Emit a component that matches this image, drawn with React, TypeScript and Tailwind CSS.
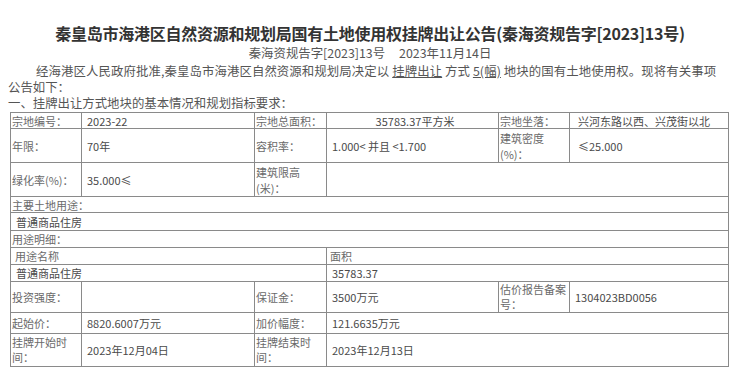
import React from "react";

const font = { fontFamily: '"Noto Sans CJK SC", "Noto Sans", sans-serif' };

const B = "border border-[#8a8a8a] align-middle p-0 leading-[14px]";
const L = B + " text-[#6a6a6a] pl-[1px]";
const V = B + " text-[#4a4a4a] pl-[5px]";

export default function App() {
  return (
    <div className="w-[740px] h-[368px] bg-white overflow-hidden" style={font}>
      <div className="pt-[23px]">
        <div className="text-center text-[16px] leading-[20px] font-bold text-[#333] tracking-[-0.25px]">
          秦皇岛市海港区自然资源和规划局国有土地使用权挂牌出让公告(秦海资规告字[2023]13号)
        </div>
        <div className="mt-[2px] flex justify-center gap-[14px] text-[12.4px] leading-[16px] text-[#555]">
          <span>秦海资规告字[2023]13号</span>
          <span>2023年11月14日</span>
        </div>
        <div className="mt-[2px] pl-[8px] text-[12.4px] leading-[16px] text-[#555] whitespace-nowrap">
          <div className="pl-[28px] tracking-[0.1px]">
            经海港区人民政府批准,秦皇岛市海港区自然资源和规划局决定以 <span className="underline">挂牌出让</span> 方式{" "}
            <span className="underline">5(幅)</span> 地块的国有土地使用权。现将有关事项
          </div>
          <div>公告如下：</div>
          <div>一、挂牌出让方式地块的基本情况和规划指标要求：</div>
        </div>
        <div className="mt-[1px] pl-[10px]">
          <table className="border-collapse table-fixed w-[718px] text-[11px]">
            <colgroup>
              <col className="w-[71px]" />
              <col className="w-[173px]" />
              <col className="w-[72px]" />
              <col className="w-[172px]" />
              <col className="w-[71px]" />
              <col className="w-[159px]" />
            </colgroup>
            <tbody>
              <tr className="h-[16px]">
                <td className={L}>宗地编号：</td>
                <td className={V}>2023-22</td>
                <td className={L}>宗地总面积：</td>
                <td className={V + " text-center"}>35783.37平方米</td>
                <td className={L}>宗地坐落：</td>
                <td className={V + " pl-[8px]"}>兴河东路以西、兴茂街以北</td>
              </tr>
              <tr className="h-[34px]">
                <td className={L}>年限：</td>
                <td className={V}>70年</td>
                <td className={L}>容积率：</td>
                <td className={V + " pl-[3px]"}>1.000&lt; 并且 &lt;1.700</td>
                <td className={L + " leading-[16px]"}>
                  建筑密度
                  <br />
                  (%)：
                </td>
                <td className={V + " pl-[8px]"}>≤25.000</td>
              </tr>
              <tr className="h-[34px]">
                <td className={L}>绿化率(%)：</td>
                <td className={V}>35.000≤</td>
                <td className={L + " leading-[16px]"}>
                  建筑限高
                  <br />
                  (米)：
                </td>
                <td className={V} colSpan={3}></td>
              </tr>
              <tr className="h-[16px]">
                <td className={L} colSpan={6}>主要土地用途：</td>
              </tr>
              <tr className="h-[18px]">
                <td className={V + " pl-[4px]"} colSpan={6}>普通商品住房</td>
              </tr>
              <tr className="h-[17px]">
                <td className={L} colSpan={6}>用途明细：</td>
              </tr>
              <tr className="h-[17px]">
                <td className={L + " pl-[4px]"} colSpan={3}>用途名称</td>
                <td className={L + " pl-[3px]"} colSpan={3}>面积</td>
              </tr>
              <tr className="h-[17px]">
                <td className={V + " pl-[4px]"} colSpan={3}>普通商品住房</td>
                <td className={V + " pl-[3px]"} colSpan={3}>35783.37</td>
              </tr>
              <tr className="h-[31px]">
                <td className={L}>投资强度：</td>
                <td className={V}></td>
                <td className={L}>保证金：</td>
                <td className={V}>3500万元</td>
                <td className={L + " leading-[15px]"}>
                  估价报告备案
                  <br />
                  号：
                </td>
                <td className={V}>1304023BD0056</td>
              </tr>
              <tr className="h-[21px]">
                <td className={L}>起始价：</td>
                <td className={V}>8820.6007万元</td>
                <td className={L}>加价幅度：</td>
                <td className={V} colSpan={3}>121.6635万元</td>
              </tr>
              <tr className="h-[33px]">
                <td className={L + " leading-[15px]"}>
                  挂牌开始时
                  <br />
                  间：
                </td>
                <td className={V}>2023年12月04日</td>
                <td className={L + " leading-[15px]"}>
                  挂牌结束时
                  <br />
                  间：
                </td>
                <td className={V} colSpan={3}>2023年12月13日</td>
              </tr>
            </tbody>
          </table>
        </div>
      </div>
    </div>
  );
}
